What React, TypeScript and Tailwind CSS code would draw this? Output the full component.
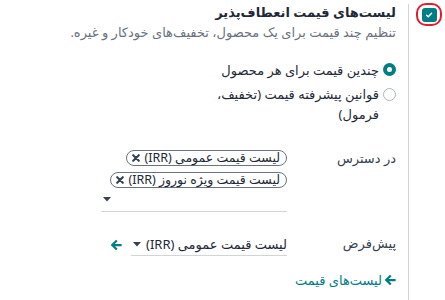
import React from "react";

const TEAL = "#017e84";

function ArrowLeft({ className }: { className?: string }) {
  // fa-arrow-right mirrored for rtl
  return (
    <svg viewBox="0 0 16 16" className={className} fill="none">
      <path d="M14 8H3.5M8 3 3 8l5 5" stroke={TEAL} strokeWidth="3" strokeLinecap="square" strokeLinejoin="miter" />
    </svg>
  );
}

function Caret() {
  return (
    <svg viewBox="0 0 10 6" className="w-[8px] h-[5px]">
      <path d="M0 0h10L5 5.5z" fill="#374151" />
    </svg>
  );
}

function Tag({ label }: { label: string }) {
  return (
    <div className="flex items-center h-[16px] rounded-full border border-[#6b7280] pr-[6px] pl-[5px] gap-[4px] text-[12.5px] leading-none text-[#1f2937]">
      <span>{label}</span>
      <svg viewBox="0 0 10 10" className="w-[8px] h-[8px]">
        <path d="M1.5 1.5l7 7M8.5 1.5l-7 7" stroke="#374151" strokeWidth="2.6" strokeLinecap="round" />
      </svg>
    </div>
  );
}

export default function App() {
  return (
    <div
      dir="rtl"
      className="w-[445px] h-[300px] bg-white flex overflow-hidden text-[13px] leading-[20px] text-[#374151] font-['Noto_Sans','DejaVu_Sans',sans-serif]"
    >
      {/* checkbox column */}
      <div className="w-[36px] shrink-0 flex justify-start pr-[3px] pt-[3px]">
        <div className="w-[26px] h-[23px] rounded-[10px] border-2 border-[#e11d2e] flex items-center justify-center">
          <div className="w-[15px] h-[14px] rounded-[3px] bg-[#017e84] flex items-center justify-center">
            <svg viewBox="0 0 10 10" className="w-[8px] h-[8px]">
              <path d="M2 5.2 4.1 7.3 8.2 2.8" stroke="white" strokeWidth="1.8" fill="none" strokeLinecap="round" strokeLinejoin="round" />
            </svg>
          </div>
        </div>
      </div>

      {/* content */}
      <div className="flex-1 mt-[4px] border-r border-[#d1d5db] pr-[12px]">
        <div className="-mt-[2px] font-bold text-[#1f2937]">لیست‌های قیمت انعطاف‌پذیر</div>
        <div className="text-[#6b7280]">تنظیم چند قیمت برای یک محصول، تخفیف‌های خودکار و غیره.</div>

        <div className="mt-[18px] flex flex-col gap-[4px] w-[186px]">
          <label className="flex items-start gap-[4px]">
            <span className="mt-[3px] w-[13px] h-[13px] shrink-0 rounded-full bg-[#017e84] flex items-center justify-center">
              <span className="w-[5px] h-[5px] rounded-full bg-white" />
            </span>
            <span className="text-[#1f2937]">چندین قیمت برای هر محصول</span>
          </label>
          <label className="flex items-start gap-[4px]">
            <span className="mt-[4px] w-[13px] h-[13px] shrink-0 rounded-full border border-[#adb5bd] bg-white" />
            <span className="text-[#1f2937]">قوانین پیشرفته قیمت (تخفیف، فرمول)</span>
          </label>
        </div>

        <div className="mt-[24px] flex items-start">
          <div className="w-[109px] shrink-0">در دسترس</div>
          <div className="w-[186px] flex flex-col items-start pt-[2px] border-b border-[#d1d5db]">
            <Tag label="لیست قیمت عمومی (IRR)" />
            <div className="h-[6px]" />
            <Tag label="لیست قیمت ویژه نوروز (IRR)" />
            <div className="w-full h-[23px] flex items-center justify-end pl-[2px]">
              <Caret />
            </div>
          </div>
        </div>

        <div className="mt-[21px] flex items-start">
          <div className="w-[109px] shrink-0">پیش‌فرض</div>
          <div className="flex items-center gap-[9px]">
            <div className="w-[156px] h-[23px] border-b border-[#d1d5db] flex items-center justify-between pl-[2px]">
              <span className="text-[#1f2937]">لیست قیمت عمومی (IRR)</span>
              <Caret />
            </div>
            <ArrowLeft className="w-[12px] h-[12px]" />
          </div>
        </div>

        <div className="mt-[14px] flex items-center gap-[2px] font-medium text-[#017e84]">
          <ArrowLeft className="w-[12px] h-[12px]" />
          <span>لیست‌های قیمت</span>
        </div>
      </div>
    </div>
  );
}
